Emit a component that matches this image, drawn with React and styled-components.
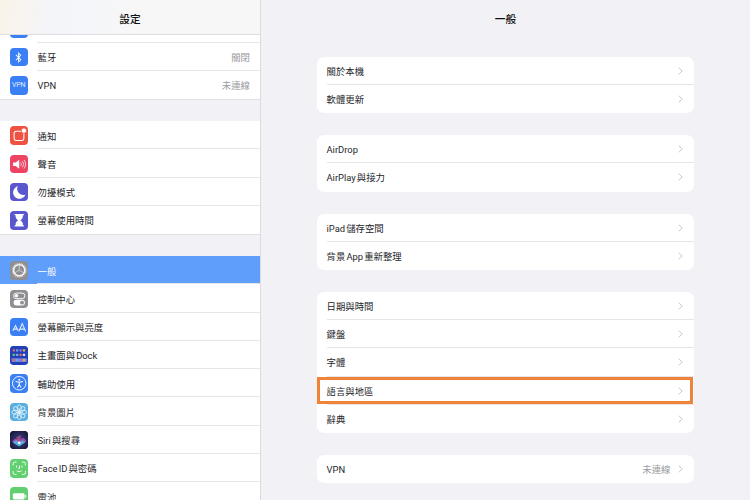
import styled, { createGlobalStyle } from "styled-components";
import { FaBluetoothB } from "react-icons/fa";

const GlobalStyle = createGlobalStyle`
  html, body {
    margin: 0;
    padding: 0;
    width: 750px;
    height: 500px;
    overflow: hidden;
    background: #f1f1f6;
    font-family: "Roboto", "Noto Sans CJK TC", "Noto Sans", sans-serif;
  }
  * { box-sizing: border-box; }
`;

const Page = styled.div`
  display: flex;
  width: 750px;
  height: 500px;
  overflow: hidden;
`;

// Left column
const Sidebar = styled.aside`
  display: flex;
  flex-direction: column;
  width: 261px;
  height: 500px;
  flex-shrink: 0;
  background: #f1f1f6;
  border-right: 1px solid #dcdce0;
`;

const SideHeader = styled.header`
  display: flex;
  align-items: center;
  justify-content: center;
  height: 35px;
  flex-shrink: 0;
  position: relative;
  z-index: 1;
  font-size: 10.7px;
  font-weight: 500;
  padding-top: 2px;
  color: #111;
  background: linear-gradient(100deg, #fbf3e9 0%, #f3f5fa 22%, #f7f7f8 50%, #f7f7f7 100%);
  border-bottom: 1px solid #dedee2;
`;

const SideScroll = styled.div`
  flex: 1;
  overflow: hidden;
`;

const SideList = styled.div`
  display: flex;
  flex-direction: column;
  gap: 22px;
  margin-top: -20.55px;
`;

const SideGroup = styled.div`
  background: #fff;
  box-shadow: 0 1px 0 #e0e0e4;
`;

const SideRow = styled.div`
  display: flex;
  align-items: center;
  height: 28.25px;
  padding: 0.5px 10px 0 9.5px;
  position: relative;
  color: ${(p) => (p.$active ? "#fff" : "#26262a")};
  background: ${(p) => (p.$active ? "#5f9efa" : "transparent")};
  font-size: 9.4px;
  word-spacing: -1.2px;

  &:not(:last-child)::after {
    content: "";
    position: absolute;
    left: 37px;
    right: 0;
    bottom: 0;
    height: 1px;
    background: #e6e6ea;
  }
`;

const IconBox = styled.span`
  display: flex;
  align-items: center;
  justify-content: center;
  width: 18.5px;
  height: 18.5px;
  border-radius: 4px;
  flex-shrink: 0;
  margin-right: 9.5px;
  overflow: hidden;
  color: #fff;
  background: ${(p) => p.$bg};
`;

const VpnMark = styled.span`
  font-size: 7px;
  letter-spacing: -0.2px;
  color: #dfeaff;
`;

const SideLabel = styled.span`
  flex: 1;
  white-space: nowrap;
`;

const SideValue = styled.span`
  color: #9a9aa0;
  font-size: 9.4px;
`;

// Right column
const Detail = styled.main`
  flex: 1;
  display: flex;
  flex-direction: column;
  height: 500px;
  overflow: hidden;
`;

const DetailHeader = styled.header`
  display: flex;
  align-items: center;
  justify-content: center;
  height: 35px;
  flex-shrink: 0;
  padding-top: 2px;
  font-size: 10.7px;
  font-weight: 500;
  color: #111;
`;

const DetailList = styled.div`
  display: flex;
  flex-direction: column;
  gap: 22.1px;
  width: 377px;
  margin: 21.7px 0 0 56px;
`;

const Card = styled.section`
  background: #fff;
  border-radius: 7px;
`;

const CardRow = styled.div`
  display: flex;
  align-items: center;
  height: 28.2px;
  padding: 0 11px 0.4px 9.5px;
  position: relative;
  font-size: 9.4px;
  word-spacing: -1.2px;
  color: #26262a;

  &:not(:last-child)::after {
    content: "";
    position: absolute;
    left: 9.5px;
    right: 0;
    bottom: 0;
    height: 1px;
    background: #e6e6ea;
  }
`;

const CardLabel = styled.span`
  flex: 1;
  white-space: nowrap;
`;

const CardValue = styled.span`
  color: #9a9aa0;
  margin-right: 7.5px;
`;

const Highlight = styled.div`
  position: absolute;
  inset: 0 1px 0.5px 0;
  z-index: 1;
  border: 3px solid #f0833a;
  pointer-events: none;
`;

const Chevron = () => (
  <svg width="5" height="8" viewBox="0 0 5 8" fill="none">
    <path d="M0.7 0.7 L4.2 4 L0.7 7.3" stroke="#c4c4c8" strokeWidth="0.9" />
  </svg>
);

// Settings icons, drawn by hand because no icon set has the iOS versions
const BellIcon = () => (
  <svg width="18.5" height="18.5" viewBox="0 0 18 18" fill="none">
    <rect x="4" y="5" width="9.5" height="9" rx="2" stroke="#fff" strokeWidth="1" />
    <circle cx="13.5" cy="4.5" r="2.6" fill="#fff" stroke="#ee5241" strokeWidth="0.8" />
  </svg>
);

const SoundIcon = () => (
  <svg width="18.5" height="18.5" viewBox="0 0 18 18" fill="none">
    <path d="M3 7.3h2.4L9 4.6v8.8L5.4 10.7H3z" fill="#fff" />
    <path d="M10.4 7.4a2.4 2.4 0 0 1 0 3.2M12 6a4.4 4.4 0 0 1 0 6M13.6 4.8a6.4 6.4 0 0 1 0 8.4" stroke="#fff" strokeWidth="0.7" />
  </svg>
);

const MoonIcon = () => (
  <svg width="18.5" height="18.5" viewBox="0 0 18 18">
    <path d="M7.6 3.2a6.2 6.2 0 1 0 7.4 8.2A6 6 0 0 1 7.6 3.2z" fill="#fff" />
  </svg>
);

const HourglassIcon = () => (
  <svg width="18.5" height="18.5" viewBox="0 0 18 18">
    <path d="M4.5 3h9v1.2h-1v1.3c0 1.6-1.4 2.6-2.4 3.5 1 .9 2.4 1.9 2.4 3.5v1.3h1V15h-9v-1.2h1v-1.3c0-1.6 1.4-2.6 2.4-3.5-1-.9-2.4-1.9-2.4-3.5V4.2h-1z" fill="#fff" />
  </svg>
);

const GearIcon = () => {
  const teeth = Array.from({ length: 24 }, (_, i) => i * 15);
  return (
    <svg width="18.5" height="18.5" viewBox="0 0 18 18" fill="none">
      {teeth.map((a) => (
        <line key={a} x1="9" y1="1.8" x2="9" y2="3.6" stroke="#e9e9ec" strokeWidth="0.8" transform={`rotate(${a} 9 9)`} />
      ))}
      <circle cx="9" cy="9" r="5.4" stroke="#f2f2f4" strokeWidth="1.5" />
      <path d="M9 9 L9 4 M9 9 L13.3 11.5 M9 9 L4.7 11.5" stroke="#e2e2e5" strokeWidth="0.7" />
    </svg>
  );
};

const ToggleIcon = () => (
  <svg width="18.5" height="18.5" viewBox="0 0 18 18" fill="none">
    <rect x="3.5" y="3" width="11" height="5.4" rx="2.7" stroke="#fff" strokeWidth="0.9" />
    <circle cx="6.3" cy="5.7" r="1.7" fill="#fff" />
    <rect x="3.5" y="9.6" width="11" height="5.4" rx="2.7" fill="#fff" />
    <circle cx="11.7" cy="12.3" r="1.9" fill="#8e8e93" />
  </svg>
);

const DisplayIcon = () => (
  <svg width="18.5" height="18.5" viewBox="0 0 18 18" fill="none" stroke="#e6efff" strokeWidth="1.1">
    <path d="M2.8 12.4 L5.4 7.4 L8 12.4 M3.7 10.8 H7.1" />
    <path d="M8.6 13 L11.9 5.4 L15.2 13 M9.8 10.8 H14" />
  </svg>
);

const HomeIcon = () => {
  const colors = ["#e9655d", "#6da7f0", "#a06ce0", "#f0b24a", "#5cc06c", "#6da7f0", "#e9655d", "#d8d8f0"];
  return (
    <svg width="18.5" height="18.5" viewBox="0 0 18 18">
      <rect width="18" height="18" fill="#2340b8" />
      {[3.2, 7.6].map((y) =>
        colors.slice(0, 4).map((c, i) => (
          <rect key={`${y}${i}`} x={2.6 + i * 3.3} y={y} width="2.2" height="2.2" rx="0.5" fill={y > 5 ? colors[i + 4] : c} />
        ))
      )}
      <rect x="1.5" y="12" width="15" height="3.6" rx="1" fill="#7385d8" />
      {colors.slice(0, 4).map((c, i) => (
        <rect key={c} x={2.6 + i * 3.3} y="12.7" width="2.2" height="2.2" rx="0.5" fill={c} />
      ))}
    </svg>
  );
};

const AccessIcon = () => (
  <svg width="18.5" height="18.5" viewBox="0 0 18 18" fill="none" stroke="#fff">
    <circle cx="9" cy="9" r="6.6" strokeWidth="0.9" />
    <circle cx="9" cy="5.6" r="1" fill="#fff" stroke="none" />
    <path d="M5.4 7.2 L9 8 L12.6 7.2 M9 8 V10.2 M9 10.2 L7.2 13.2 M9 10.2 L10.8 13.2" strokeWidth="1" />
  </svg>
);

const FlowerIcon = () => {
  const petals = [0, 45, 90, 135, 180, 225, 270, 315];
  return (
    <svg width="18.5" height="18.5" viewBox="0 0 18 18" fill="none" stroke="#e8f5fd" strokeWidth="0.8">
      {petals.map((a) => (
        <ellipse key={a} cx="9" cy="5.2" rx="2" ry="3.4" transform={`rotate(${a} 9 9)`} />
      ))}
    </svg>
  );
};

const SiriIcon = () => (
  <svg width="18.5" height="18.5" viewBox="0 0 18 18">
    <defs>
      <radialGradient id="siriBg" cx="50%" cy="50%" r="70%">
        <stop offset="0%" stopColor="#3a3f8e" />
        <stop offset="100%" stopColor="#14142a" />
      </radialGradient>
    </defs>
    <rect width="18" height="18" fill="url(#siriBg)" />
    <path d="M2 10.5 C5 6 7 7 9 11 C11 6 13 5 16 10 C13 12 11 14 9 14 C7 14 4 12 2 10.5z" fill="#c64fc9" opacity="0.75" />
    <path d="M3 11 C6 8 8 9 9 13 C10 9 12 8 15 11 C12 13 10 15 9 15 C8 15 5 13 3 11z" fill="#45c4e8" opacity="0.8" />
    <path d="M6 6 L9 13 L11 4 z" fill="#e4587a" opacity="0.6" />
    <circle cx="9" cy="11.5" r="1.4" fill="#fff" />
  </svg>
);

const FaceIcon = () => (
  <svg width="18.5" height="18.5" viewBox="0 0 18 18" fill="none" stroke="#fff" strokeWidth="0.9" strokeLinecap="round">
    <path d="M3 6V4.6A1.6 1.6 0 0 1 4.6 3H6M12 3h1.4A1.6 1.6 0 0 1 15 4.6V6M15 12v1.4a1.6 1.6 0 0 1-1.6 1.6H12M6 15H4.6A1.6 1.6 0 0 1 3 13.4V12" />
    <path d="M6.4 6.8v1.2M11.6 6.8v1.2M9.2 6.8v2.7H8.5M6.8 11.6c1.3 1 3.1 1 4.4 0" />
  </svg>
);

const BatteryIcon = () => (
  <svg width="18.5" height="18.5" viewBox="0 0 18 18" fill="none">
    <rect x="2.8" y="6" width="11.4" height="6.2" rx="1.4" fill="#fff" />
    <rect x="14.8" y="7.8" width="1" height="2.6" rx="0.5" fill="#fff" />
  </svg>
);

const sideGroups = [
  [
    { bg: "#3b7ff5", icon: null },
    { label: "藍牙", value: "關閉", bg: "#3b7ff5", icon: <FaBluetoothB size={11} /> },
    { label: "VPN", value: "未連線", bg: "#3b7ff5", icon: <VpnMark>VPN</VpnMark> },
  ],
  [
    { label: "通知", bg: "#ee5241", icon: <BellIcon /> },
    { label: "聲音", bg: "#ec4462", icon: <SoundIcon /> },
    { label: "勿擾模式", bg: "#5a56ce", icon: <MoonIcon /> },
    { label: "螢幕使用時間", bg: "#5a56ce", icon: <HourglassIcon /> },
  ],
  [
    { label: "一般", bg: "#8e8e93", icon: <GearIcon />, active: true },
    { label: "控制中心", bg: "#8e8e93", icon: <ToggleIcon /> },
    { label: "螢幕顯示與亮度", bg: "#3b7ff5", icon: <DisplayIcon /> },
    { label: "主畫面與 Dock", bg: "#2340b8", icon: <HomeIcon /> },
    { label: "輔助使用", bg: "#3b7ff5", icon: <AccessIcon /> },
    { label: "背景圖片", bg: "#58aee0", icon: <FlowerIcon /> },
    { label: "Siri 與搜尋", bg: "#14142a", icon: <SiriIcon /> },
    { label: "Face ID 與密碼", bg: "#62cf70", icon: <FaceIcon /> },
    { label: "電池", bg: "#62cf70", icon: <BatteryIcon /> },
  ],
];

const cards = [
  [{ label: "關於本機" }, { label: "軟體更新" }],
  [{ label: "AirDrop" }, { label: "AirPlay 與接力" }],
  [{ label: "iPad 儲存空間" }, { label: "背景 App 重新整理" }],
  [
    { label: "日期與時間" },
    { label: "鍵盤" },
    { label: "字體" },
    { label: "語言與地區", marked: true },
    { label: "辭典" },
  ],
  [{ label: "VPN", value: "未連線" }],
];

export default function App() {
  return (
    <Page>
      <GlobalStyle />
      <Sidebar>
        <SideHeader>設定</SideHeader>
        <SideScroll>
          <SideList>
            {sideGroups.map((group, i) => (
              <SideGroup key={i}>
                {group.map((row, j) => (
                  <SideRow key={j} $active={row.active}>
                    <IconBox $bg={row.bg}>{row.icon}</IconBox>
                    <SideLabel>{row.label}</SideLabel>
                    {row.value && <SideValue>{row.value}</SideValue>}
                  </SideRow>
                ))}
              </SideGroup>
            ))}
          </SideList>
        </SideScroll>
      </Sidebar>
      <Detail>
        <DetailHeader>一般</DetailHeader>
        <DetailList>
          {cards.map((card, i) => (
            <Card key={i}>
              {card.map((row) => (
                <CardRow key={row.label}>
                  <CardLabel>{row.label}</CardLabel>
                  {row.value && <CardValue>{row.value}</CardValue>}
                  <Chevron />
                  {row.marked && <Highlight />}
                </CardRow>
              ))}
            </Card>
          ))}
        </DetailList>
      </Detail>
    </Page>
  );
}
